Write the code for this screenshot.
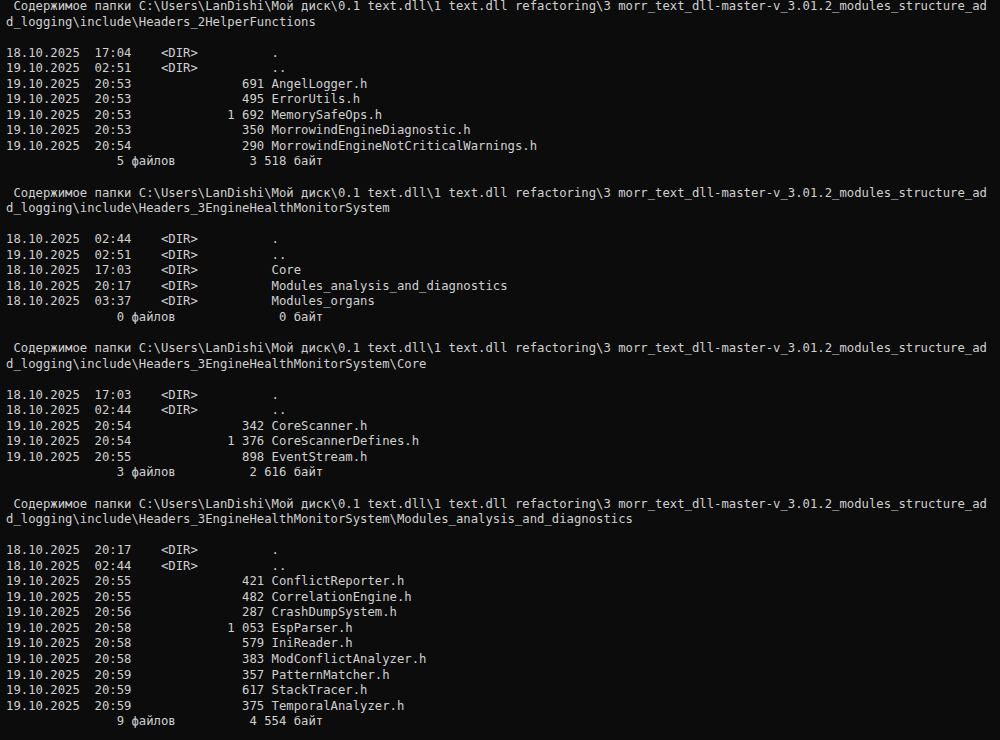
const ROOT =
  " Содержимое папки C:\\Users\\LanDishi\\Мой диск\\0.1 text.dll\\1 text.dll refactoring\\3 morr_text_dll-master-v_3.01.2_modules_structure_ad";

type Entry = [date: string, time: string, size: string | null, name: string];

type Block = { path: string; entries: Entry[]; files: string; bytes: string };

const blocks: Block[] = [
  {
    path: "d_logging\\include\\Headers_2HelperFunctions",
    entries: [
      ["18.10.2025", "17:04", null, "."],
      ["19.10.2025", "02:51", null, ".."],
      ["19.10.2025", "20:53", "691", "AngelLogger.h"],
      ["19.10.2025", "20:53", "495", "ErrorUtils.h"],
      ["19.10.2025", "20:53", "1 692", "MemorySafeOps.h"],
      ["19.10.2025", "20:53", "350", "MorrowindEngineDiagnostic.h"],
      ["19.10.2025", "20:54", "290", "MorrowindEngineNotCriticalWarnings.h"],
    ],
    files: "5",
    bytes: "3 518",
  },
  {
    path: "d_logging\\include\\Headers_3EngineHealthMonitorSystem",
    entries: [
      ["18.10.2025", "02:44", null, "."],
      ["19.10.2025", "02:51", null, ".."],
      ["18.10.2025", "17:03", null, "Core"],
      ["18.10.2025", "20:17", null, "Modules_analysis_and_diagnostics"],
      ["18.10.2025", "03:37", null, "Modules_organs"],
    ],
    files: "0",
    bytes: "0",
  },
  {
    path: "d_logging\\include\\Headers_3EngineHealthMonitorSystem\\Core",
    entries: [
      ["18.10.2025", "17:03", null, "."],
      ["18.10.2025", "02:44", null, ".."],
      ["19.10.2025", "20:54", "342", "CoreScanner.h"],
      ["19.10.2025", "20:54", "1 376", "CoreScannerDefines.h"],
      ["19.10.2025", "20:55", "898", "EventStream.h"],
    ],
    files: "3",
    bytes: "2 616",
  },
  {
    path: "d_logging\\include\\Headers_3EngineHealthMonitorSystem\\Modules_analysis_and_diagnostics",
    entries: [
      ["18.10.2025", "20:17", null, "."],
      ["18.10.2025", "02:44", null, ".."],
      ["19.10.2025", "20:55", "421", "ConflictReporter.h"],
      ["19.10.2025", "20:55", "482", "CorrelationEngine.h"],
      ["19.10.2025", "20:56", "287", "CrashDumpSystem.h"],
      ["19.10.2025", "20:58", "1 053", "EspParser.h"],
      ["19.10.2025", "20:58", "579", "IniReader.h"],
      ["19.10.2025", "20:58", "383", "ModConflictAnalyzer.h"],
      ["19.10.2025", "20:59", "357", "PatternMatcher.h"],
      ["19.10.2025", "20:59", "617", "StackTracer.h"],
      ["19.10.2025", "20:59", "375", "TemporalAnalyzer.h"],
    ],
    files: "9",
    bytes: "4 554",
  },
];

function entryLine([date, time, size, name]: Entry) {
  const mid = size === null ? "    <DIR>          " : size.padStart(18, " ") + " ";
  return `${date}  ${time}${mid}${name}`;
}

function summaryLine(files: string, bytes: string) {
  return `${files.padStart(16, " ")} файлов ${bytes.padStart(14, " ")} байт`;
}

const lines: string[] = [];
blocks.forEach((b, i) => {
  if (i > 0) lines.push("");
  lines.push(ROOT, b.path, "");
  b.entries.forEach((e) => lines.push(entryLine(e)));
  lines.push(summaryLine(b.files, b.bytes));
});

export default function App() {
  return (
    <div className="w-[1000px] h-[740px] overflow-hidden bg-[#0c0c0c] text-[#d0d0d0]">
      <div className="-mt-px pl-[6px] font-['DejaVu_Sans_Mono','Liberation_Mono',monospace] text-[12.26px] leading-[15.56px] whitespace-pre">
        {lines.map((l, i) => (
          <div key={i} className="h-[15.56px]">
            {l}
          </div>
        ))}
      </div>
    </div>
  );
}
